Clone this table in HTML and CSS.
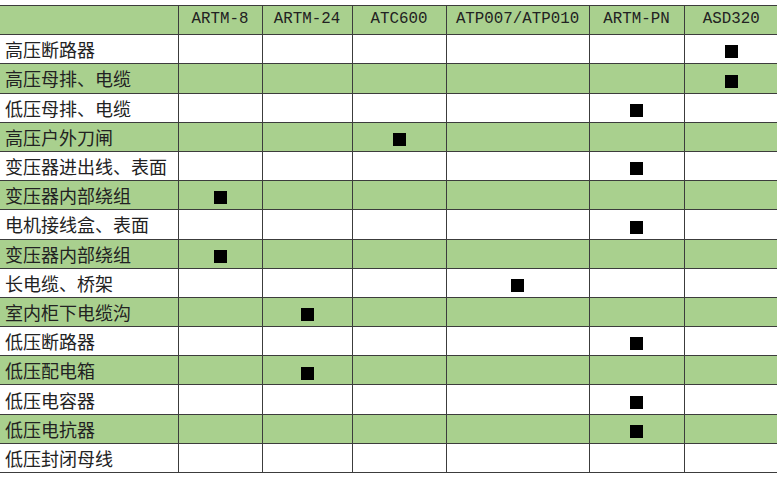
FILE: index.html
```html
<!DOCTYPE html>
<html lang="zh">
<head>
<meta charset="utf-8">
<title>产品选型表</title>
<link rel="stylesheet" href="styles.css">
</head>
<body>
<table class="sel">
  <colgroup>
    <col class="c0"><col class="c1"><col class="c2"><col class="c3"><col class="c4"><col class="c5"><col class="c6">
  </colgroup>
  <thead>
    <tr class="g">
      <th></th><th>ARTM-8</th><th>ARTM-24</th><th>ATC600</th><th>ATP007/ATP010</th><th>ARTM-PN</th><th>ASD320</th>
    </tr>
  </thead>
  <tbody>
    <tr><td class="name">高压断路器</td><td></td><td></td><td></td><td></td><td></td><td><span class="m"></span></td></tr>
    <tr class="g"><td class="name">高压母排、电缆</td><td></td><td></td><td></td><td></td><td></td><td><span class="m"></span></td></tr>
    <tr><td class="name">低压母排、电缆</td><td></td><td></td><td></td><td></td><td><span class="m"></span></td><td></td></tr>
    <tr class="g"><td class="name">高压户外刀闸</td><td></td><td></td><td><span class="m"></span></td><td></td><td></td><td></td></tr>
    <tr><td class="name">变压器进出线、表面</td><td></td><td></td><td></td><td></td><td><span class="m"></span></td><td></td></tr>
    <tr class="g"><td class="name">变压器内部绕组</td><td><span class="m"></span></td><td></td><td></td><td></td><td></td><td></td></tr>
    <tr><td class="name">电机接线盒、表面</td><td></td><td></td><td></td><td></td><td><span class="m"></span></td><td></td></tr>
    <tr class="g"><td class="name">变压器内部绕组</td><td><span class="m"></span></td><td></td><td></td><td></td><td></td><td></td></tr>
    <tr><td class="name">长电缆、桥架</td><td></td><td></td><td></td><td><span class="m"></span></td><td></td><td></td></tr>
    <tr class="g"><td class="name">室内柜下电缆沟</td><td></td><td><span class="m"></span></td><td></td><td></td><td></td><td></td></tr>
    <tr><td class="name">低压断路器</td><td></td><td></td><td></td><td></td><td><span class="m"></span></td><td></td></tr>
    <tr class="g"><td class="name">低压配电箱</td><td></td><td><span class="m"></span></td><td></td><td></td><td></td><td></td></tr>
    <tr><td class="name">低压电容器</td><td></td><td></td><td></td><td></td><td><span class="m"></span></td><td></td></tr>
    <tr class="g"><td class="name">低压电抗器</td><td></td><td></td><td></td><td></td><td><span class="m"></span></td><td></td></tr>
    <tr><td class="name">低压封闭母线</td><td></td><td></td><td></td><td></td><td></td><td></td></tr>
  </tbody>
</table>
</body>
</html>
```
FILE: styles.css
```css
html, body {
  margin: 0;
  padding: 0;
  background: #ffffff;
}
body {
  padding-top: 5px;
  font-family: "Noto Sans CJK SC", sans-serif;
  color: #1a1a1a;
}
.sel {
  border-collapse: collapse;
  table-layout: fixed;
  width: 778px;
}
.c0 { width: 178px; }
.c1 { width: 84px; }
.c2 { width: 90px; }
.c3 { width: 94px; }
.c4 { width: 143px; }
.c5 { width: 95px; }
.c6 { width: 94px; }
.sel th, .sel td {
  border: 1px solid #3c3c3c;
  height: 29.2px;
  padding: 0;
  text-align: center;
  vertical-align: middle;
  box-sizing: border-box;
}
.sel tr > :first-child {
  border-left: none;
}
.sel tr > :last-child {
  border-right: none;
}
.sel th {
  font-family: "Liberation Mono", monospace;
  font-weight: normal;
  font-size: 15.8px;
  color: #222;
  line-height: 1;
}
.sel td.name {
  text-align: left;
  padding-left: 5px;
  font-size: 18px;
  line-height: 1;
  color: #222;
}
.sel tr.g {
  background: #a9d08e;
}
.m {
  display: inline-block;
  width: 13px;
  height: 13px;
  background: #000;
  vertical-align: middle;
}
```
